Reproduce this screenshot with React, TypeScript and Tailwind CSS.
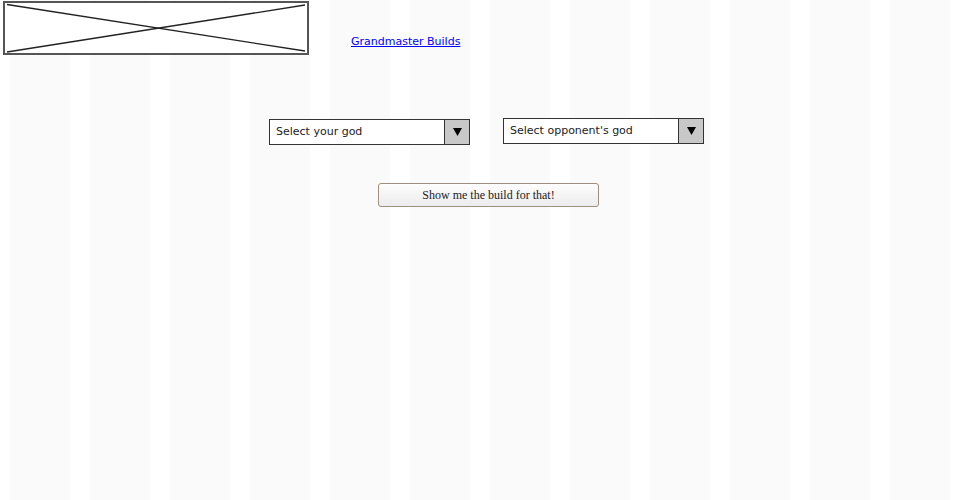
const sketchFont = { fontFamily: '"Comic Sans MS", "DejaVu Sans", sans-serif' };

/* ─── Sketch pieces ─── */
const ImagePlaceholder = () => (
  <div className="relative h-[54px] w-[306px] border-2 border-[#555] bg-white">
    <svg className="absolute inset-0 h-full w-full" viewBox="0 0 302 50" preserveAspectRatio="none">
      <line x1="2" y1="1.5" x2="300" y2="48" stroke="#222" strokeWidth="1.3" />
      <line x1="2" y1="49" x2="300" y2="2" stroke="#222" strokeWidth="1.3" />
    </svg>
  </div>
);

const SketchSelect = ({ label }: { label: string }) => (
  <div className="flex h-[26px] w-[201px] border border-[#333] bg-white">
    <div className="flex flex-1 items-center pl-[6px] text-[11px] text-[#222]" style={sketchFont}>
      {label}
    </div>
    <div className="flex w-[25px] items-center justify-center border-l border-[#333] bg-[#c8c8c8]">
      <svg width="9" height="8" viewBox="0 0 9 8">
        <polygon points="0 0 9 0 4.5 8" fill="#000" />
      </svg>
    </div>
  </div>
);

export default function App() {
  return (
    <div className="min-h-[500px] w-[960px] bg-white bg-[repeating-linear-gradient(90deg,transparent_0_10px,#fafafa_10px_70px,transparent_70px_80px)]">
      {/* Header */}
      <div className="flex items-start pl-[3px] pt-[1px]">
        <ImagePlaceholder />
        <a
          href="#"
          className="ml-[42px] mt-[33px] text-[11px] text-[#0000ff] underline"
          style={sketchFont}
        >
          Grandmaster Builds
        </a>
      </div>

      {/* God pickers */}
      <div className="mt-[63px] flex items-start gap-[33px] pl-[269px]">
        <div className="mt-[1px]">
          <SketchSelect label="Select your god" />
        </div>
        <SketchSelect label="Select opponent's god" />
      </div>

      {/* Submit */}
      <div className="mt-[36px] pl-[378px]">
        <button
          className="h-[24px] w-[221px] rounded-[3px] border border-[#a08f7d] bg-[linear-gradient(#fdfdfd,#ececec)] text-[12px] text-[#222]"
          style={{ fontFamily: '"Liberation Serif", serif' }}
        >
          Show me the build for that!
        </button>
      </div>
    </div>
  );
}
